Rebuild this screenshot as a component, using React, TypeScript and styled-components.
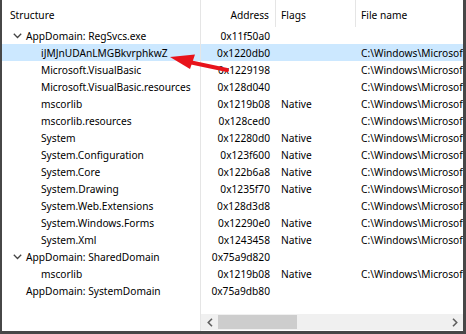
import React from "react";
import styled, { createGlobalStyle } from "styled-components";

const Global = createGlobalStyle`
  html, body { margin: 0; padding: 0; background: #fff; }
  body { font-family: "Segoe UI", "Noto Sans", "Open Sans", sans-serif; font-size: 10.2px; color: #000; }
`;

const ROW_H = 17;
const HEADER_H = 27;

type Row = {
  name: string;
  level: 0 | 1;
  expanded?: boolean;
  addr: string;
  flags?: string;
  file?: boolean;
  selected?: boolean;
};

const FILE = "C:\\Windows\\Microsoft.NET\\Framework\\v4.0.30319";

const rows: Row[] = [
  { name: "AppDomain: RegSvcs.exe", level: 0, expanded: true, addr: "0x11f50a0" },
  { name: "iJMJnUDAnLMGBkvrphkwZ", level: 1, addr: "0x1220db0", file: true, selected: true },
  { name: "Microsoft.VisualBasic", level: 1, addr: "0x1229198", file: true },
  { name: "Microsoft.VisualBasic.resources", level: 1, addr: "0x128d040", file: true },
  { name: "mscorlib", level: 1, addr: "0x1219b08", flags: "Native", file: true },
  { name: "mscorlib.resources", level: 1, addr: "0x128ced0", file: true },
  { name: "System", level: 1, addr: "0x12280d0", flags: "Native", file: true },
  { name: "System.Configuration", level: 1, addr: "0x123f600", flags: "Native", file: true },
  { name: "System.Core", level: 1, addr: "0x122b6a8", flags: "Native", file: true },
  { name: "System.Drawing", level: 1, addr: "0x1235f70", flags: "Native", file: true },
  { name: "System.Web.Extensions", level: 1, addr: "0x128d3d8", file: true },
  { name: "System.Windows.Forms", level: 1, addr: "0x12290e0", flags: "Native", file: true },
  { name: "System.Xml", level: 1, addr: "0x1243458", flags: "Native", file: true },
  { name: "AppDomain: SharedDomain", level: 0, expanded: true, addr: "0x75a9d820" },
  { name: "mscorlib", level: 1, addr: "0x1219b08", flags: "Native", file: true },
  { name: "AppDomain: SystemDomain", level: 0, addr: "0x75a9db80" },
];

const Frame = styled.div`
  position: relative;
  width: 466px;
  height: 334px;
  box-sizing: border-box;
  border-left: 2px solid #474747;
  border-right: 3px solid #474747;
  border-bottom: 3px solid #474747;
  display: flex;
  overflow: hidden;
  background: #fff;
`;

const LeftPane = styled.div`
  width: 198px;
  flex: none;
  border-right: 1px solid #e5e5e5;
  display: flex;
  flex-direction: column;
`;

const RightPane = styled.div`
  flex: 1;
  min-width: 0;
  display: flex;
  flex-direction: column;
  overflow: hidden;
`;

const HeaderBar = styled.div`
  height: ${HEADER_H}px;
  flex: none;
  display: flex;
  align-items: stretch;
`;

const HeaderCell = styled.div<{ $w?: number; $align?: "left" | "right"; $sep?: boolean }>`
  ${(p) => (p.$w ? `width: ${p.$w}px; flex: none;` : "flex: 1;")}
  box-sizing: border-box;
  display: flex;
  align-items: center;
  justify-content: ${(p) => (p.$align === "right" ? "flex-end" : "flex-start")};
  padding: ${(p) => (p.$align === "right" ? "0 6px 0 0" : "0 0 0 5px")};
  border-right: ${(p) => (p.$sep ? "1px solid #e5e5e5" : "none")};
  white-space: nowrap;
  padding-top: 3px;
`;

const TreeHeader = styled.div`
  height: ${HEADER_H}px;
  flex: none;
  display: flex;
  align-items: center;
  padding: 3px 0 0 8px;
  box-sizing: border-box;
`;

const Body = styled.div`
  flex: 1;
  display: flex;
  flex-direction: column;
`;

const TreeRow = styled.div<{ $level: number; $selected?: boolean }>`
  height: ${ROW_H}px;
  flex: none;
  display: flex;
  align-items: center;
  padding-left: ${(p) => (p.$level === 0 ? 9 : 39)}px;
  background: ${(p) => (p.$selected ? "#cce8ff" : "transparent")};
  white-space: nowrap;
`;

const Toggle = styled.span`
  width: 15px;
  flex: none;
  display: flex;
  align-items: center;
  justify-content: flex-start;
  padding-left: 2px;
  box-sizing: border-box;
`;

const DataRow = styled.div<{ $selected?: boolean }>`
  height: ${ROW_H}px;
  flex: none;
  display: flex;
  align-items: center;
  background: ${(p) => (p.$selected ? "#cce8ff" : "transparent")};
  white-space: nowrap;
`;

const Cell = styled.div<{ $w: number; $align?: "left" | "right" }>`
  width: ${(p) => p.$w}px;
  flex: none;
  box-sizing: border-box;
  text-align: ${(p) => (p.$align === "right" ? "right" : "left")};
  padding: ${(p) => (p.$align === "right" ? "0 6px 0 0" : "0 0 0 5px")};
  overflow: hidden;
`;

const Scrollbar = styled.div`
  height: 16px;
  flex: none;
  background: #f0f0f0;
  display: flex;
  align-items: center;
  margin-bottom: 1px;
`;

const ScrollArrow = styled.div`
  width: 17px;
  height: 16px;
  flex: none;
  display: flex;
  align-items: center;
  justify-content: center;
`;

const Track = styled.div`
  flex: 1;
  height: 100%;
  display: flex;
  align-items: center;
`;

const Thumb = styled.div`
  width: 79px;
  height: 14px;
  background: #cdcdcd;
`;

const Overlay = styled.svg`
  position: absolute;
  left: -2px;
  top: 0;
  pointer-events: none;
`;

const Spacer = styled.div`
  flex: 1;
`;

const Chevron = () => (
  <svg width="9" height="6" viewBox="0 0 9 6">
    <polyline points="0.8,0.8 4.5,4.5 8.2,0.8" fill="none" stroke="#444" strokeWidth="1.3" />
  </svg>
);

const ScrollGlyph = ({ dir }: { dir: "l" | "r" }) => (
  <svg width="6" height="9" viewBox="0 0 6 9">
    <polyline
      points={dir === "l" ? "5,0.8 1.3,4.5 5,8.2" : "1,0.8 4.7,4.5 1,8.2"}
      fill="none"
      stroke="#606060"
      strokeWidth="1.6"
    />
  </svg>
);

export default function App() {
  return (
    <>
      <Global />
      <Frame>
        <LeftPane>
          <TreeHeader>Structure</TreeHeader>
          <Body>
            {rows.map((r, i) => (
              <TreeRow key={i} $level={r.level} $selected={r.selected}>
                {r.level === 0 && <Toggle>{r.expanded ? <Chevron /> : null}</Toggle>}
                {r.name}
              </TreeRow>
            ))}
            <Spacer />
          </Body>
        </LeftPane>
        <RightPane>
          <HeaderBar>
            <HeaderCell $w={75} $align="right" $sep>
              Address
            </HeaderCell>
            <HeaderCell $w={80} $sep>
              Flags
            </HeaderCell>
            <HeaderCell>File name</HeaderCell>
          </HeaderBar>
          <Body>
            {rows.map((r, i) => (
              <DataRow key={i} $selected={r.selected}>
                <Cell $w={75} $align="right">
                  {r.addr}
                </Cell>
                <Cell $w={80}>{r.flags ?? ""}</Cell>
                <Cell $w={300}>{r.file ? FILE : ""}</Cell>
              </DataRow>
            ))}
            <Spacer />
          </Body>
          <Scrollbar>
            <ScrollArrow>
              <ScrollGlyph dir="l" />
            </ScrollArrow>
            <Track>
              <Thumb />
            </Track>
            <ScrollArrow>
              <ScrollGlyph dir="r" />
            </ScrollArrow>
          </Scrollbar>
        </RightPane>
        <Overlay width="466" height="334" viewBox="0 0 466 334">
          <line x1="189" y1="62" x2="227" y2="70" stroke="#e8131b" strokeWidth="4" strokeLinecap="round" />
          <polygon points="170,57 195,54.5 190,69" fill="#e8131b" />
        </Overlay>
      </Frame>
    </>
  );
}
